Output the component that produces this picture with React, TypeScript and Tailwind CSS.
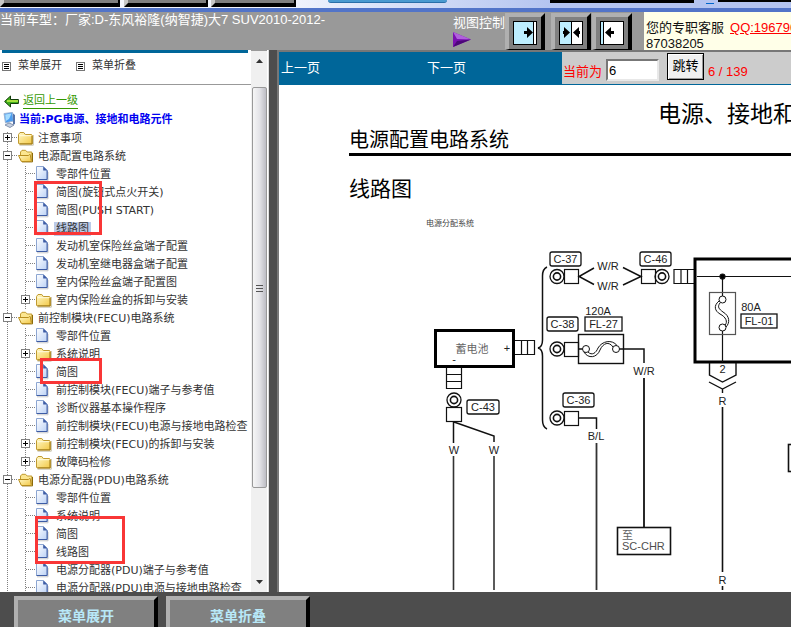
import type { ReactNode } from "react";

type TreeNode = {
  label: string;
  level: 1 | 2;
  kind: "page" | "closed" | "open";
  selected?: boolean;
};

const TREE: TreeNode[] = [
  { label: "注意事项", level: 1, kind: "closed" },
  { label: "电源配置电路系统", level: 1, kind: "open" },
  { label: "零部件位置", level: 2, kind: "page" },
  { label: "简图(旋钮式点火开关)", level: 2, kind: "page" },
  { label: "简图(PUSH START)", level: 2, kind: "page" },
  { label: "线路图", level: 2, kind: "page", selected: true },
  { label: "发动机室保险丝盒端子配置", level: 2, kind: "page" },
  { label: "发动机室继电器盒端子配置", level: 2, kind: "page" },
  { label: "室内保险丝盒端子配置图", level: 2, kind: "page" },
  { label: "室内保险丝盒的拆卸与安装", level: 2, kind: "closed" },
  { label: "前控制模块(FECU)电路系统", level: 1, kind: "open" },
  { label: "零部件位置", level: 2, kind: "page" },
  { label: "系统说明", level: 2, kind: "closed" },
  { label: "简图", level: 2, kind: "page" },
  { label: "前控制模块(FECU)端子与参考值", level: 2, kind: "page" },
  { label: "诊断仪器基本操作程序", level: 2, kind: "page" },
  { label: "前控制模块(FECU)电源与接地电路检查", level: 2, kind: "page" },
  { label: "前控制模块(FECU)的拆卸与安装", level: 2, kind: "closed" },
  { label: "故障码检修", level: 2, kind: "closed" },
  { label: "电源分配器(PDU)电路系统", level: 1, kind: "open" },
  { label: "零部件位置", level: 2, kind: "page" },
  { label: "系统说明", level: 2, kind: "page" },
  { label: "简图", level: 2, kind: "page" },
  { label: "线路图", level: 2, kind: "page" },
  { label: "电源分配器(PDU)端子与参考值", level: 2, kind: "page" },
  { label: "电源分配器(PDU)电源与接地电路检查", level: 2, kind: "page" },
];

// Dotted guide line with an optional +/- box, one 18px cell of the tree
function Guide({ box, branch, from = 0 }: { box?: "plus" | "minus"; branch?: boolean; from?: number }) {
  return (
    <svg width="18" height="18" viewBox="0 0 18 18" className="shrink-0" shapeRendering="crispEdges">
      <path d={`M7.5 ${from}V18`} stroke="#808080" strokeDasharray="1 1" />
      {(branch || box) && <path d="M8 7.5H18" stroke="#808080" strokeDasharray="1 1" />}
      {box && (
        <>
          <rect x="3.5" y="3.5" width="8" height="8" fill="#fff" stroke="#808080" />
          <path d={box === "plus" ? "M5 7.5H10M7.5 5V10" : "M5 7.5H10"} stroke="#000" />
        </>
      )}
    </svg>
  );
}

function NodeIcon({ kind }: { kind: TreeNode["kind"] }) {
  return (
    <svg width="18" height="18" viewBox="0 0 18 18" className="shrink-0">
      <defs>
        <linearGradient id="pageFill" x1="0" y1="0" x2="1" y2="1">
          <stop offset="0" stopColor="#ffffff" />
          <stop offset="1" stopColor="#bcd2f6" />
        </linearGradient>
        <linearGradient id="folderFill" x1="0" y1="0" x2="1" y2="1">
          <stop offset="0" stopColor="#fff9c8" />
          <stop offset="1" stopColor="#f3c845" />
        </linearGradient>
      </defs>
      {kind === "page" && (
        <>
          <path d="M1 14.8H12V6" stroke="#c8c8c8" fill="none" />
          <path d="M.5 .5H7.5L11 4V13.5H.5Z" fill="url(#pageFill)" stroke="#8da6d2" />
          <path d="M11.2 4.5V13.5H.6" fill="none" stroke="#3d5ca5" />
          <path d="M7.2 .4L11.4 4.6H7.2Z" fill="#3d5ca5" />
        </>
      )}
      {kind === "closed" && (
        <>
          <path d="M1.5 15.2H15.3V5" stroke="#c8c4b0" fill="none" />
          <path d="M.5 4.5L2 2.5H5.8L7.3 4.5H13.5L14.3 5.3V14H1.2L.5 13.2Z" fill="url(#folderFill)" stroke="#c09a30" />
          <path d="M1.5 5.7H13" stroke="#fffbe0" />
          <path d="M1.5 13.9H14V6" stroke="#a07c18" fill="none" />
        </>
      )}
      {kind === "open" && (
        <>
          <path d="M2.5 12V4L4 2.3H7.6L9.2 4H13.8V12Z" fill="#fbe690" stroke="#c09a30" />
          <path d="M4 13.9H14.5V5" stroke="#8c6a08" fill="none" />
          <path d="M.5 7.5H10.4L11.6 6.5H12.2L13.4 13.5H3.4Z" fill="url(#folderFill)" stroke="#b88e1e" />
        </>
      )}
    </svg>
  );
}

function TreeRow({ node, first }: { node: TreeNode; first: boolean }) {
  const box = node.kind === "closed" ? "plus" : node.kind === "open" ? "minus" : undefined;
  return (
    <li className="flex h-[18px] items-center whitespace-nowrap">
      {node.level === 1 ? (
        <Guide box={box} from={first ? 2 : 0} />
      ) : (
        <>
          <Guide />
          <Guide box={box} branch />
        </>
      )}
      <NodeIcon kind={node.kind} />
      <a href="#" className={`px-[2px] leading-[14px] ${node.selected ? "bg-[#bccbe8]" : ""}`}>
        {node.label}
      </a>
    </li>
  );
}

function MenuGlyph() {
  return (
    <svg width="9" height="9" viewBox="0 0 9 9" shapeRendering="crispEdges">
      <rect x=".5" y=".5" width="8" height="8" fill="#fff" stroke="#777" />
      <path d="M2 2.5H7M2 4.5H7M2 6.5H7" stroke="#000" />
    </svg>
  );
}

function ViewButton({ label, children }: { label: string; children: ReactNode }) {
  return (
    <button
      type="button"
      aria-label={label}
      className="flex h-[37px] w-10 shrink-0 items-center justify-center border-4 border-b border-t-[#b0b0b0] border-r-black border-b-black border-l-[#b0b0b0] bg-[#808080]"
    >
      <svg width="24" height="24" viewBox="0 0 24 24">
        <rect x=".5" y=".5" width="23" height="23" fill="#fff" stroke="#000" />
        {children}
      </svg>
    </button>
  );
}

function FooterButton({ children }: { children: ReactNode }) {
  return (
    <button
      type="button"
      className="h-9 w-36 shrink-0 border-4 border-b-0 border-t-[#b0b0b0] border-r-black border-l-[#b0b0b0] bg-[#808080] text-sm font-bold text-[#b8e8f8]"
    >
      {children}
    </button>
  );
}

function Tag({ x, y, w, children, square }: { x: number; y: number; w: number; children: string; square?: boolean }) {
  return (
    <g>
      <rect x={x} y={y} width={w} height="14" rx={square ? 0 : 2} fill="#fff" strokeWidth="1.3" />
      <text x={x + w / 2} y={y + 11}>
        {children}
      </text>
    </g>
  );
}

function Ring({ x, y }: { x: number; y: number }) {
  return (
    <>
      <circle cx={x} cy={y} r="7" strokeWidth="1.3" />
      <circle cx={x} cy={y} r="3.6" strokeWidth="1.6" />
    </>
  );
}

function WiringDiagram() {
  return (
    <svg
      width="640"
      height="355"
      viewBox="279 236 640 355"
      className="block shrink-0 fill-none [&_text]:fill-[#222] [&_text]:stroke-none"
      stroke="#111"
      strokeWidth="1.2"
      fontSize="11"
      textAnchor="middle"
    >
      {/* battery */}
      <rect x="435.5" y="330.5" width="78" height="36" strokeWidth="3" stroke="#000" />
      <text x="472" y="353" opacity="0.7">蓄电池</text>
      <text x="507" y="352">+</text>
      <text x="454" y="363">-</text>
      <path d="M515 340.5H534.5V354.5H515M521.5 340.5V354.5M527.5 340.5V354.5" />
      <path d="M446.5 368V388.5H461.5V368M446.5 374.5H461.5M446.5 381.5H461.5" />
      <Ring x={454} y={400} />
      <rect x="446.5" y="407.5" width="15" height="14" />
      <Tag x={467} y={400} w={32}>C-43</Tag>
      <path d="M453.5 422V443M454 422L494 436V442" strokeWidth="1.5" />
      <text x="454" y="454">W</text>
      <text x="494" y="454">W</text>
      <path d="M453.5 456V590M494 456V590" strokeWidth="1.6" stroke="#333" />

      <path d="M547 267Q542.5 269 542.5 276V340Q542.5 347 538 348Q542.5 349 542.5 356V420Q542.5 427 547 429" strokeWidth="1.5" />

      {/* C-37 to C-46 */}
      <Tag x={550} y={252} w={31}>C-37</Tag>
      <Ring x={557} y={276.5} />
      <rect x="564.5" y="269.5" width="14" height="14" />
      <path d="M594 268L579 276.5L594 284.5M623 267.5L641 276.5L623 285" strokeWidth="1.5" />
      <text x="608" y="270">W/R</text>
      <text x="608" y="290">W/R</text>
      <Tag x={640} y={252} w={31}>C-46</Tag>
      <rect x="641.5" y="269.5" width="14" height="14" />
      <Ring x={662} y={276.5} />
      <path d="M694 269.5H674V283.5H694M681 269.5V283.5M687.5 269.5V283.5" />

      {/* C-38 and its fuse */}
      <text x="598" y="315">120A</text>
      <Tag x={547} y={317} w={31}>C-38</Tag>
      <Tag x={585} y={317} w={37} square>FL-27</Tag>
      <Ring x={557} y={349} />
      <rect x="564.5" y="342.5" width="14" height="14" />
      <rect x="578.5" y="334.5" width="45" height="29" strokeWidth="1.4" />
      <path d="M578 349H582.5M619.5 349H644V363" strokeWidth="1.5" />
      <g strokeWidth="1">
        <circle cx="586" cy="349" r="3.5" />
        <circle cx="616" cy="349" r="3.5" />
        <path d="M584 352C588 359 597 358 600 350C603 343 609 341 613 347M588 352C592 356 596 353 598 348C602 341 612 339 617 345.5" />
      </g>
      <text x="644" y="375">W/R</text>
      <path d="M644 378V527" strokeWidth="1.8" />
      <rect x="617.5" y="527.5" width="53" height="27" strokeWidth="1.6" />
      <text x="622" y="539" textAnchor="start" opacity="0.7">至</text>
      <text x="622" y="550" textAnchor="start" opacity="0.8">SC-CHR</text>

      {/* C-36 */}
      <Tag x={563} y={393} w={31}>C-36</Tag>
      <Ring x={557} y={418} />
      <rect x="564.5" y="411.5" width="14" height="14" />
      <path d="M578 418H596.5V429" strokeWidth="1.5" />
      <text x="596" y="440">B/L</text>
      <path d="M596.5 443V590" strokeWidth="1.8" stroke="#333" />

      {/* fuse box */}
      <rect x="695" y="259" width="190" height="103" strokeWidth="3" stroke="#000" />
      <path d="M697 276.5H883M722.5 276.5V296M722.5 331V362" />
      <circle cx="722.5" cy="276.5" r="2.5" fill="#000" />
      <rect x="709.5" y="292.5" width="26" height="42" stroke="#555" />
      <g strokeWidth="1">
        <circle cx="722.5" cy="299.5" r="3.5" />
        <circle cx="722.5" cy="327.5" r="3.5" />
        <path d="M719 301C713 306 715 311 720 314C726 317 728 322 725 325M720 303C717 307 719 309 723 312C730 316 730 323 726 327" />
      </g>
      <text x="751" y="311">80A</text>
      <Tag x={741} y={314} w={36} square>FL-01</Tag>
      <path d="M709.5 363V375L722.5 382L736 375V363M709 382L722.5 389L736 382M722.5 389V393" strokeWidth="1.4" />
      <text x="722.5" y="373">2</text>
      <text x="722.5" y="405">R</text>
      <path d="M722.5 407V572M722.5 586V590" strokeWidth="1.6" />
      <text x="722.5" y="584">R</text>
      <rect x="788.5" y="444.5" width="50" height="27" strokeWidth="1.6" />
    </svg>
  );
}

function TopStrip() {
  return (
    <div className="flex h-3 shrink-0 items-start overflow-hidden border-b-4 border-[#5274c8] bg-linear-to-r from-[#f4f6fd] from-35% to-[#b4c4f0] to-70%">
      <div className="mr-1 h-[7px] w-[120px] shrink-0 border-r-2 border-b-4 border-l-4 border-black border-l-[#c8c8c8] bg-[#808080]" />
      <div className="mr-[3px] h-[7px] w-[84px] shrink-0 border-r-2 border-b-4 border-l-4 border-black border-l-[#c8c8c8] bg-[#808080]" />
      <div className="mr-8 h-[7px] w-[85px] shrink-0 border-r-2 border-b-4 border-l-4 border-black border-l-[#c8c8c8] bg-[#808080]" />
      <div className="mr-[103px] h-[3px] w-[119px] shrink-0 rounded-b border-b border-[#2a6fa8] bg-[#4a9ad0]" />
      <div className="mr-3 h-[3px] w-36 shrink-0 bg-black" />
      <div className="mr-1 h-1 w-2 shrink-0 border-b border-[#0066cc]" />
      <div className="h-[2px] flex-1 bg-black" />
    </div>
  );
}

function Header() {
  return (
    <header className="flex h-[38px] shrink-0 bg-[#999] text-[13px] leading-4 text-white">
      <p className="w-[453px] shrink-0 whitespace-nowrap">当前车型：厂家:D-东风裕隆(纳智捷)大7 SUV2010-2012-</p>
      <div className="w-[52px] shrink-0 pt-[3px] whitespace-nowrap">
        视图控制
        <svg width="18" height="15" viewBox="0 0 18 15" className="mt-px block">
          <path d="M0 0L18 7.5L0 15Z" fill="#7a10b0" />
          <path d="M0 0L18 7.5L4 7Z" fill="#b060dc" />
          <path d="M0 15L18 7.5L4 9Z" fill="#4c0878" />
        </svg>
      </div>
      <div className="mr-3 flex shrink-0 pt-px">
        <ViewButton label="显示目录">
          <rect x="1" y="1" width="19" height="22" fill="#bdeeff" />
          <path d="M20.5 1V23" stroke="#000" />
          <path d="M11 10H14V6L20 11.5L14 17V13H11Z" fill="#000" />
        </ViewButton>
        <div className="w-[6px]" />
        <ViewButton label="左右分栏">
          <rect x="1" y="1" width="11" height="22" fill="#bdeeff" />
          <path d="M12.5 1V23" stroke="#000" />
          <path d="M4 10H5V6L11 11.5L5 17V13H4ZM21 10H20V6L14 11.5L20 17V13H21Z" fill="#000" />
        </ViewButton>
        <div className="w-px" />
        <ViewButton label="隐藏目录">
          <rect x="1" y="1" width="2" height="22" fill="#bdeeff" />
          <path d="M3.5 1V23" stroke="#000" />
          <path d="M14 10H11V6L5 11.5L11 17V13H14Z" fill="#000" />
        </ViewButton>
      </div>
      <div className="flex-1 overflow-hidden bg-[#ffffe8] pt-2 pl-[2px] whitespace-nowrap text-[#111]">
        <p>
          您的专职客服
          <a href="#" className="ml-[6px] text-[#f00] underline">QQ:196790</a>
        </p>
        <p>87038205</p>
      </div>
    </header>
  );
}

function SideTree() {
  return (
    <div className="flex min-h-0 w-[269px] shrink-0 overflow-hidden border-r border-[#ddd] bg-white text-[11px] text-[#333]">
      <nav className="relative w-[251px] shrink-0 overflow-hidden font-['DejaVu_Sans','Noto_Sans_CJK_SC',sans-serif]">
        <div className="mr-[3px] ml-[2px] h-[3px] bg-[#006699]" />
        <div className="flex h-8 items-center gap-[14px] border-b border-[#999] pb-1 pl-[2px]">
          <button type="button" className="flex items-center gap-[7px]">
            <MenuGlyph />
            菜单展开
          </button>
          <button type="button" className="flex items-center gap-[7px]">
            <MenuGlyph />
            菜单折叠
          </button>
        </div>
        <div className="mt-[6px] flex h-5 items-center gap-1 pl-1">
          <svg width="15" height="13" viewBox="0 0 15 13">
            <path d="M.6 6.5L6.5 1V4.5H14.4V8.5H6.5V12Z" fill="#3fae1c" stroke="#123c08" />
            <path d="M3 6H14" stroke="#c9f04a" strokeWidth="1.5" />
          </svg>
          <a href="#" className="border-b border-[#339900] leading-[14px] text-[#339900]">返回上一级</a>
        </div>
        <div className="flex h-[18px] items-center gap-[3px] pl-[3px] font-bold whitespace-nowrap text-[#0000f0]">
          <svg width="13" height="16" viewBox="0 0 13 16">
            <path d="M1 1.5L9.5 .5L10.5 9L2.5 11Z" fill="#4b9df0" stroke="#9bb4d4" />
            <path d="M2.2 2.5L8.5 1.6L6 7L2.8 9Z" fill="#a5dcff" />
            <path d="M10 1.5L12 3V12L10 13Z" fill="#5573a8" />
            <path d="M2 13L6 11L11 13L7 15.5Z" fill="#c5cfdf" stroke="#8494b0" />
          </svg>
          当前:PG电源、接地和电路元件
        </div>
        <ul className="pt-px">
          {TREE.map((node, i) => (
            <TreeRow key={i} node={node} first={i === 0} />
          ))}
        </ul>

        {/* red callouts drawn over the tree */}
        <div className="absolute top-[131px] left-[34px] h-[54px] w-[68px] border-[3px] border-[#f93636]" />
        <div className="absolute top-[308px] left-10 h-[26px] w-[62px] border-[3px] border-[#f93636]" />
        <div className="absolute top-[466px] left-[35px] h-12 w-[90px] border-[3px] border-[#f93636]" />
      </nav>
      <div className="flex w-4 shrink-0 flex-col items-center border-t border-[#999] bg-[#f0f0f0]">
        <div className="flex h-9 shrink-0 items-center pb-4">
          <svg width="7" height="4" viewBox="0 0 7 4">
            <path d="M0 4L3.5 0L7 4Z" fill="#333" />
          </svg>
        </div>
        <div className="flex h-[401px] w-[15px] shrink-0 flex-col items-center justify-center gap-px rounded-xs border border-[#999] bg-linear-to-r from-[#f6f6f6] via-[#e4e4e8] to-[#bdbdc4]">
          <div className="h-[2px] w-[7px] border-b border-[#555]" />
          <div className="h-[2px] w-[7px] border-b border-[#555]" />
          <div className="h-[2px] w-[7px] border-b border-[#555]" />
        </div>
        <div className="flex flex-1 items-end pb-2">
          <svg width="7" height="4" viewBox="0 0 7 4">
            <path d="M0 0L3.5 4L7 0Z" fill="#333" />
          </svg>
        </div>
      </div>
    </div>
  );
}

function Viewer() {
  return (
    <main className="flex min-w-0 flex-1 flex-col overflow-hidden border-t-2 border-l-2 border-[#777] bg-white">
      <div className="flex h-[33px] shrink-0 border-b border-[#006699] text-[13px] whitespace-nowrap">
        <div className="flex w-[283px] shrink-0 items-center bg-[#006699] pl-[2px] text-white">
          <a href="#" className="w-[146px]">上一页</a>
          <a href="#">下一页</a>
        </div>
        <form className="flex flex-1 items-center bg-[#ccc] pl-px text-[#f00]">
          <label htmlFor="page" className="mt-2 mr-1">当前为</label>
          <input
            id="page"
            defaultValue="6"
            className="mt-1 mr-2 h-[22px] w-[53px] border-2 border-t-[#777] border-r-[#e8e8e8] border-b-[#e8e8e8] border-l-[#777] bg-white px-px text-black"
          />
          <button type="button" className="mr-1 mb-1 h-[27px] w-[37px] border border-black bg-[#f0f0f0] text-black shadow-[inset_1px_1px_#fff,inset_-1px_-1px_#999]">
            跳转
          </button>
          <span className="mt-2">6 / 139</span>
        </form>
      </div>
      <article className="flex min-h-0 flex-1 flex-col overflow-hidden whitespace-nowrap text-black">
        <h1 className="mt-4 ml-[379px] text-[23px] leading-[26px]">电源、接地和</h1>
        <h2 className="ml-[70px] border-b-[3px] border-black text-xl leading-[26px]">电源配置电路系统</h2>
        <h3 className="mt-5 ml-[70px] text-[21px] leading-[26px]">线路图</h3>
        <p className="mt-4 mb-[6px] ml-[147px] text-[8px] leading-3 text-[#444]">电源分配系统</p>
        <WiringDiagram />
      </article>
    </main>
  );
}

export default function App() {
  return (
    <div className="flex h-screen flex-col overflow-hidden bg-[#4d4d4d] font-['Liberation_Sans','Noto_Sans_CJK_SC',sans-serif]">
      <TopStrip />
      <Header />
      <div className="flex min-h-0 flex-1">
        <SideTree />
        <div className="w-2 shrink-0" />
        <Viewer />
      </div>
      <footer className="flex h-[35px] shrink-0 gap-2 overflow-hidden pt-1 pl-[14px]">
        <FooterButton>菜单展开</FooterButton>
        <FooterButton>菜单折叠</FooterButton>
      </footer>
    </div>
  );
}
